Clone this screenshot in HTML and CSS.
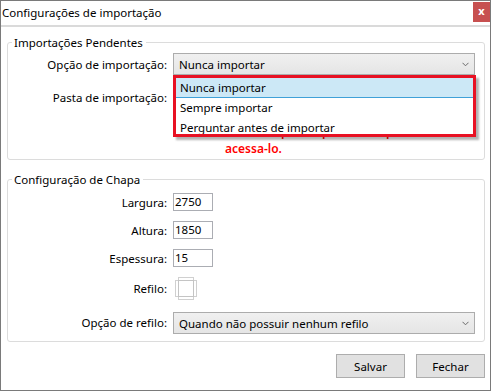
FILE: index.html
```html
<!DOCTYPE html>
<html lang="pt">
<head>
<meta charset="utf-8">
<title>Configurações de importação</title>
<link rel="stylesheet" href="styles.css">
</head>
<body>
<div class="window">
  <div class="titlebar">
    <span class="title">Configurações de importação</span>
    <span class="close">x</span>
  </div>
  <div class="content">
    <fieldset class="group group-import">
      <legend>Importações Pendentes</legend>
      <div class="form">
        <label class="lbl">Opção de importação:</label>
        <div class="cell">
          <div class="combo"><span>Nunca importar</span>
            <svg class="chev" width="7" height="5" viewBox="0 0 7 5"><path d="M0.5 0.8 L3.5 3.8 L6.5 0.8" fill="none" stroke="#6a6a6a" stroke-width="1"/></svg>
          </div>
          <div class="popup">
            <div class="item selected">Nunca importar</div>
            <div class="item">Sempre importar</div>
            <div class="item">Perguntar antes de importar</div>
          </div>
        </div>
        <label class="lbl row2">Pasta de importação:</label>
        <div class="cell row2"><div class="textbox wide"></div></div>
        <div class="error">Você não possui permissão para<br>acessa-lo.</div>
      </div>
    </fieldset>
    <fieldset class="group group-chapa">
      <legend>Configuração de Chapa</legend>
      <div class="form form2">
        <label class="lbl">Largura:</label>
        <div class="cell"><div class="textbox small">2750</div></div>
        <label class="lbl">Altura:</label>
        <div class="cell"><div class="textbox small">1850</div></div>
        <label class="lbl">Espessura:</label>
        <div class="cell"><div class="textbox small">15</div></div>
        <label class="lbl">Refilo:</label>
        <div class="cell"><svg class="check" width="22" height="23" viewBox="0 0 22 23">
          <rect x="3.5" y="0.5" width="15" height="22" fill="#fff" stroke="#d0d0d0"/>
          <rect x="0.5" y="3.5" width="21" height="16" fill="#fff" stroke="#d0d0d0"/>
          <rect x="3.5" y="3.5" width="15" height="16" fill="#fff" stroke="#c4c4c4"/>
        </svg></div>
        <label class="lbl">Opção de refilo:</label>
        <div class="cell"><div class="combo"><span>Quando não possuir nenhum refilo</span>
          <svg class="chev" width="7" height="5" viewBox="0 0 7 5"><path d="M0.5 0.8 L3.5 3.8 L6.5 0.8" fill="none" stroke="#6a6a6a" stroke-width="1"/></svg>
        </div></div>
      </div>
    </fieldset>
    <div class="buttons">
      <button class="btn">Salvar</button>
      <button class="btn">Fechar</button>
    </div>
  </div>
</div>
</body>
</html>
```

FILE: styles.css
```css
* { box-sizing: border-box; }
html, body { margin: 0; padding: 0; background: #fff; }
body {
  font-family: "Segoe UI", "Noto Sans", "Open Sans", sans-serif;
  font-size: 11.5px;
  color: #000;
}
.window {
  width: 491px;
  height: 391px;
  border: 1px solid #7a7a7a;
  background: #fff;
}
.titlebar {
  height: 26px;
  border-bottom: 2px solid #dadada;
  display: flex;
  align-items: flex-start;
  justify-content: space-between;
}
.title {
  font-size: 11.5px;
  line-height: 24px;
  padding-left: 1px;
}
.close {
  margin-top: 1px;
  width: 17px;
  height: 20px;
  background: #c75050;
  color: #fff;
  font-weight: bold;
  font-size: 11px;
  line-height: 18px;
  text-align: center;
}
.content {
  padding: 8px 5px 0 6px;
}
.group {
  margin: 0;
  padding: 0 9px 0 0;
  border: 1px solid #dcdcdc;
  border-radius: 3px;
  min-width: 0;
}
.group legend {
  margin-left: 4px;
  padding: 0 3px 0 2px;
  line-height: 15px;
}
.form {
  display: grid;
  grid-template-columns: 159px 1fr;
  column-gap: 6px;
  align-items: center;
}
.lbl {
  text-align: right;
  white-space: nowrap;
}
.cell { position: relative; }
.group-import .form { padding-top: 3px; }
.group-import { padding-bottom: 2px; }
.row2 { margin-top: 11px; }
.combo {
  height: 22px;
  border: 1px solid #acacac;
  background: linear-gradient(#f0f0f0, #e5e5e5);
  display: flex;
  align-items: center;
  justify-content: space-between;
  padding: 0 5px 0 5px;
}
.chev { display: block; }
.textbox {
  height: 22px;
  border: 1px solid #abadb3;
  background: #fff;
}
.textbox.small {
  width: 40px;
  height: 18px;
  line-height: 16px;
  padding-left: 1px;
}
.error {
  grid-column: 2;
  margin-top: 15px;
  padding-left: 52px;
  color: #ff0000;
  font-weight: 600;
  font-size: 12px;
  line-height: 17px;
  white-space: nowrap;
}
.popup {
  position: absolute;
  left: 0;
  top: 100%;
  width: 303px;
  height: 62px;
  border: 3px solid #e81123;
  background: #fff;
  overflow: hidden;
  box-shadow: 3px 3px 2px rgba(0, 0, 0, 0.3);
  z-index: 2;
}
.item {
  height: 20px;
  line-height: 19px;
  padding-left: 4px;
  white-space: nowrap;
}
.item.selected {
  background: #cce8f6;
  border-bottom: 1px solid #3fa1d8;
}
.group-chapa { margin-top: 12px; padding-bottom: 7px; }
.form2 { padding-top: 6px; row-gap: 10px; }
.form2 .check { display: block; margin-left: 2px; }
.form2 > .cell:nth-of-type(5) { margin-top: 2px; }
.buttons {
  display: flex;
  justify-content: flex-end;
  gap: 11px;
  margin-top: 12px;
}
.btn {
  width: 69px;
  height: 24px;
  border: 1px solid #adadad;
  background: #e1e1e1;
  font-family: inherit;
  font-size: 11.5px;
  color: #000;
  padding: 0;
}
```
